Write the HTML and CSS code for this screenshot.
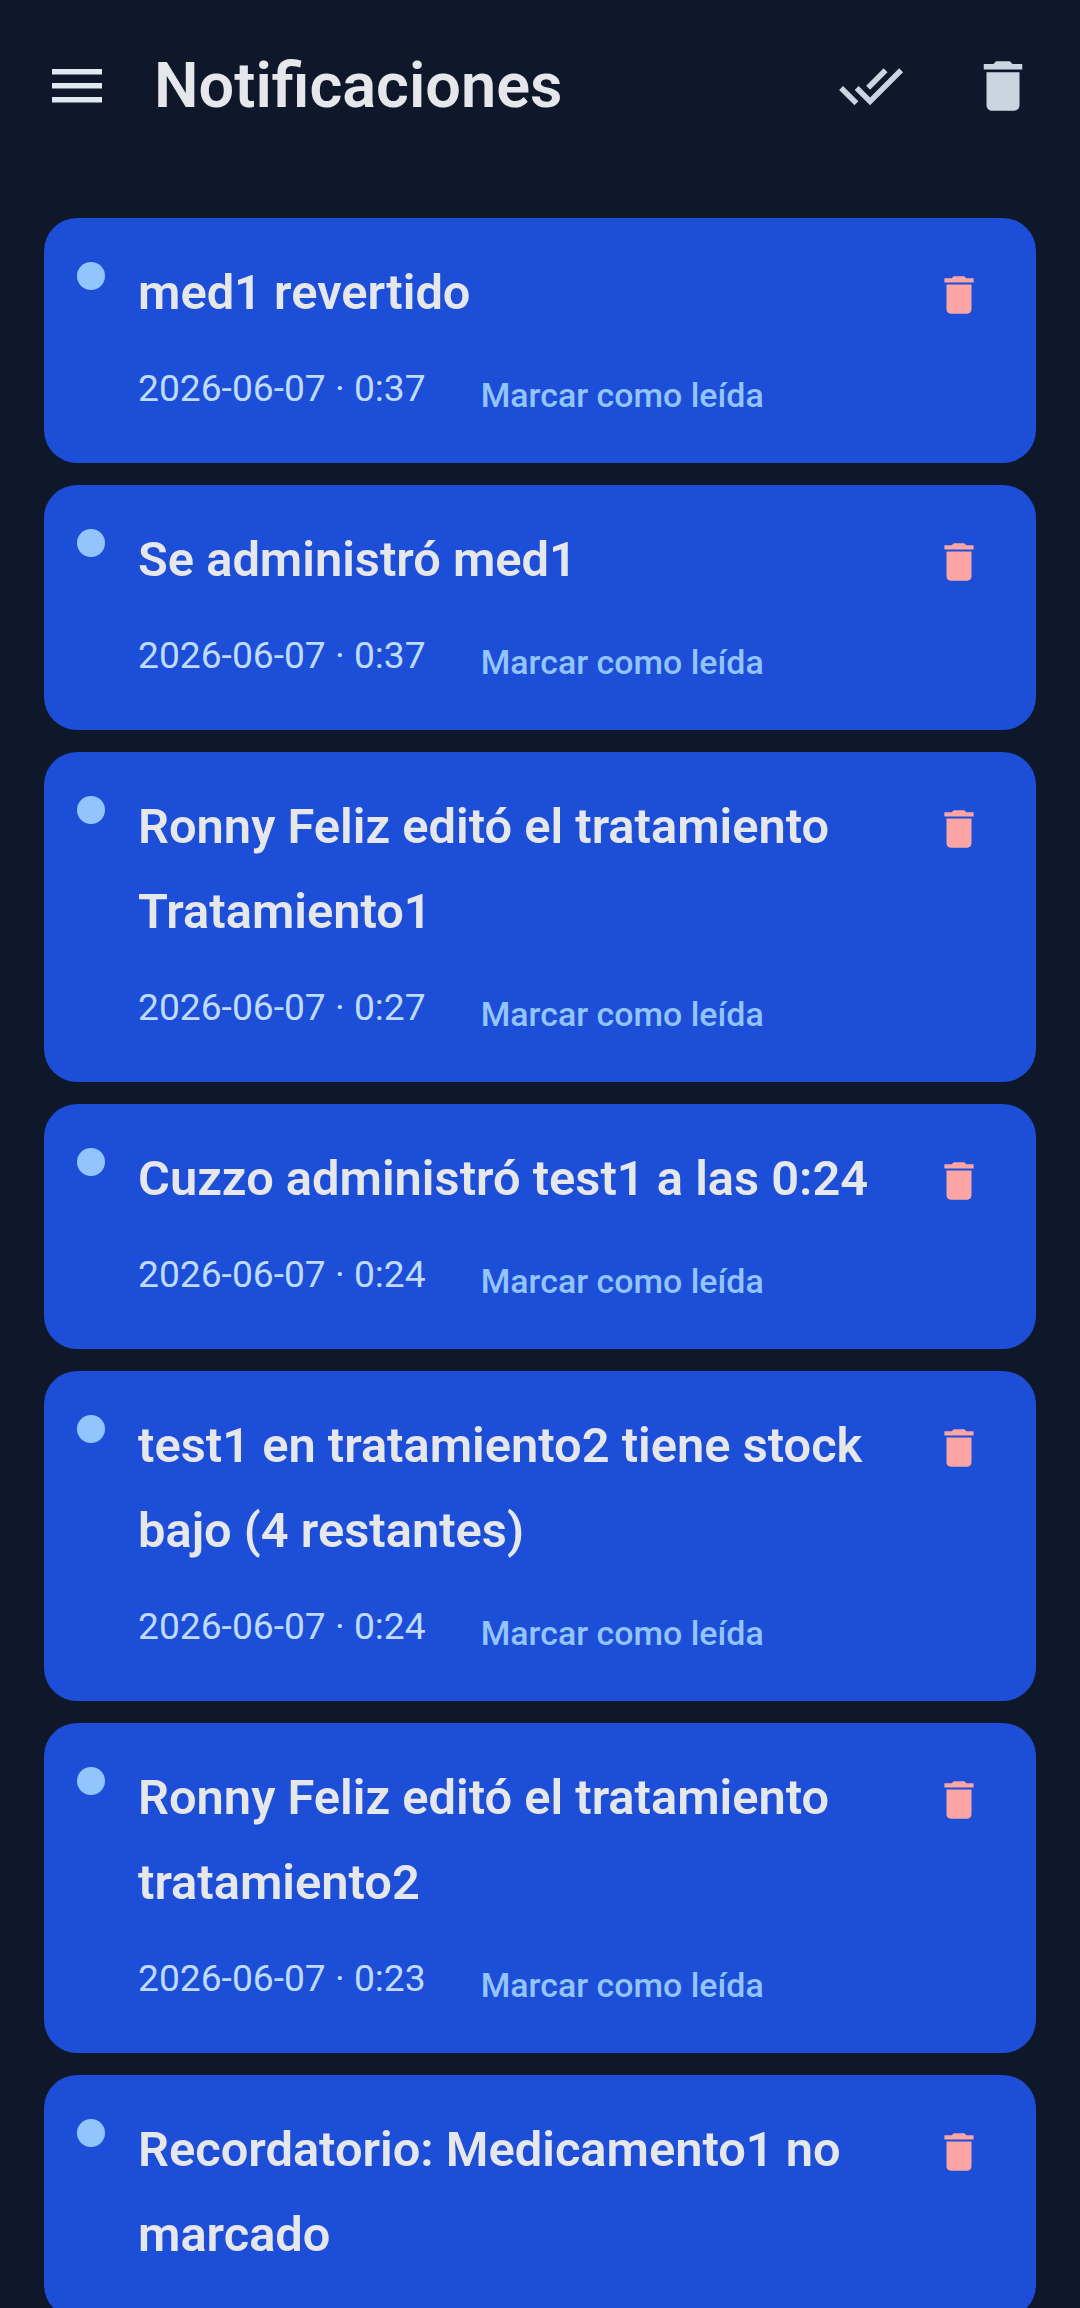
FILE: index.html
```html
<!DOCTYPE html>
<html lang="es">
<head>
<meta charset="utf-8">
<title>Notificaciones</title>
<link rel="stylesheet" href="styles.css">
</head>
<body>
<svg class="defs" width="0" height="0" aria-hidden="true">
  <symbol id="trash" viewBox="0 0 24 24"><path d="M6 19c0 1.1.9 2 2 2h8c1.1 0 2-.9 2-2V7H6v12zM19 4h-3.5l-1-1h-5l-1 1H5v2h14V4z"/></symbol>
</svg>
<header class="topbar">
  <svg class="icon-lg icon-menu" viewBox="0 0 66 66"><path d="M8 16h50v5.5H8zM8 30h50v5.5H8zM8 44h50v5.5H8z"/></svg>
  <h1 class="title">Notificaciones</h1>
  <svg class="icon-lg icon-action" viewBox="0 0 24 24"><path d="M18 7l-1.41-1.41-6.34 6.34 1.41 1.41L18 7zm4.24-1.41L11.66 16.17 7.48 12l-1.41 1.41L11.66 19l12-12-1.42-1.41zM.41 13.41L6 19l1.41-1.41L1.83 12 .41 13.41z"/></svg>
  <svg class="icon-lg icon-action icon-last"><use href="#trash"/></svg>
</header>
<main class="list">
  <article class="card"><span class="dot"></span><div class="body"><p class="msg">med1 revertido</p><div class="meta"><span class="date">2026-06-07 · 0:37</span><span class="mark">Marcar como leída</span></div></div><svg class="del"><use href="#trash"/></svg></article>
  <article class="card"><span class="dot"></span><div class="body"><p class="msg">Se administró med1</p><div class="meta"><span class="date">2026-06-07 · 0:37</span><span class="mark">Marcar como leída</span></div></div><svg class="del"><use href="#trash"/></svg></article>
  <article class="card"><span class="dot"></span><div class="body"><p class="msg">Ronny Feliz editó el tratamiento Tratamiento1</p><div class="meta"><span class="date">2026-06-07 · 0:27</span><span class="mark">Marcar como leída</span></div></div><svg class="del"><use href="#trash"/></svg></article>
  <article class="card"><span class="dot"></span><div class="body"><p class="msg">Cuzzo administró test1 a las 0:24</p><div class="meta"><span class="date">2026-06-07 · 0:24</span><span class="mark">Marcar como leída</span></div></div><svg class="del"><use href="#trash"/></svg></article>
  <article class="card"><span class="dot"></span><div class="body"><p class="msg">test1 en tratamiento2 tiene stock bajo (4 restantes)</p><div class="meta"><span class="date">2026-06-07 · 0:24</span><span class="mark">Marcar como leída</span></div></div><svg class="del"><use href="#trash"/></svg></article>
  <article class="card"><span class="dot"></span><div class="body"><p class="msg">Ronny Feliz editó el tratamiento tratamiento2</p><div class="meta"><span class="date">2026-06-07 · 0:23</span><span class="mark">Marcar como leída</span></div></div><svg class="del"><use href="#trash"/></svg></article>
  <article class="card"><span class="dot"></span><div class="body"><p class="msg">Recordatorio: Medicamento1 no marcado</p></div><svg class="del"><use href="#trash"/></svg></article>
</main>
</body>
</html>
```
FILE: styles.css
```css
* { box-sizing: border-box; }
html, body { margin: 0; height: 2308px; overflow: hidden; }
body { background: #0f172a; font-family: Roboto, "Liberation Sans", sans-serif; }
.defs { position: absolute; }

.topbar { display: flex; align-items: center; height: 172px; padding: 0 44px; }
.icon-lg { width: 66px; height: 66px; flex: none; fill: #cbd5e1; }
.icon-menu { fill: #e2e8f0; }
.title { flex: 1; margin: 0 0 0 44px; font-size: 63px; font-weight: 600; color: #e5e7eb; line-height: 72px; }
.icon-action { margin-left: 66px; }
.icon-last { margin-left: 66px; }

.list { display: flex; flex-direction: column; gap: 22px; padding: 46px 44px 0; }
.card { display: flex; align-items: flex-start; background: #1d4ed8; border-radius: 33px; padding: 32px 52px 41px 33px; }
.dot { flex: none; width: 28px; height: 28px; margin: 12px 33px 0 0; border-radius: 50%; background: #93c5fd; }
.body { flex: 1; min-width: 0; }
.msg { margin: 0; font-size: 48.8px; font-weight: 600; line-height: 85px; color: #e5e7eb; }
.meta { display: flex; align-items: flex-start; gap: 55px; margin-top: 27px; }
.date { font-size: 37.2px; line-height: 52px; color: #bfdbfe; }
.mark { font-size: 33.9px; font-weight: 500; line-height: 52px; padding-top: 8px; color: #93c5fd; }
.del { flex: none; width: 50px; height: 50px; margin: 20px 0 0 24px; fill: #fca5a5; }
```
